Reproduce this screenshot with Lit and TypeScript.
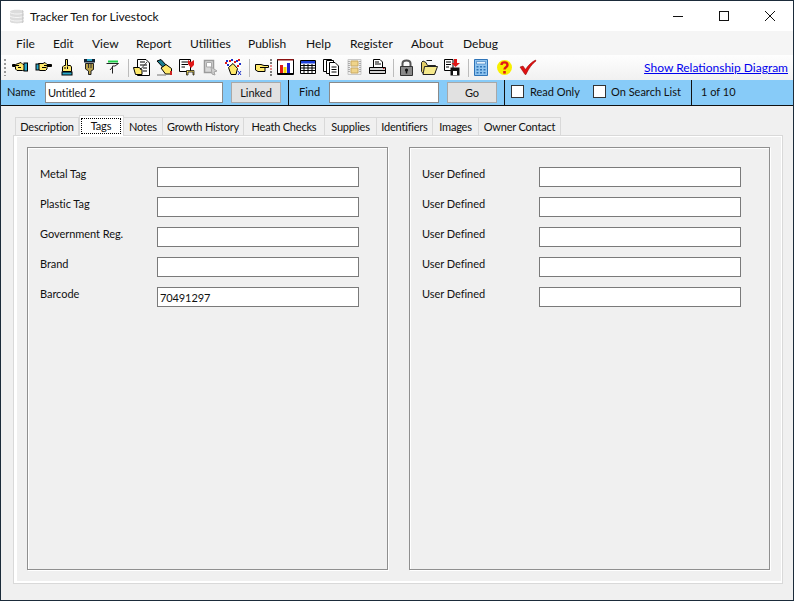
import { LitElement, html, css, svg } from "lit";
import { customElement } from "lit/decorators.js";

const hand = (d: string, cuff = "#2aa7c9") => svg`<path d="${d}" fill="#ffe96b" stroke="#000" stroke-width="1"/><rect x="1" y="5" width="3" height="6" fill="${cuff}" stroke="#000"/>`;

const icons: Record<string, unknown> = {
  left: svg`<path d="M14.5 5.5H11L9 3.5 3.5 5.5H.5V7.5H3.5V10L5 11.5H10.5L14.5 10.5Z" fill="#ffe96b" stroke="#000"/><rect x="12" y="4" width="3.5" height="8" fill="#2aa7c9" stroke="#000"/><path d="M1 6.5H7M6 8.5H9" stroke="#000"/>`,
  right: svg`${hand("M3.5 4.5H8L10 3.5 12 5.5H16.5V7.5H12V10L10.5 11.5H5L3.5 10.5Z")}<path d="M9 6.5H16M7 8.5H11" stroke="#000"/>`,
  up: svg`<path d="M7.5 .5H9.5V6.5H12.5L13.5 8V12.5H4.5V8L6 6.5H7.5Z" fill="#ffe96b" stroke="#000"/><rect x="4" y="13" width="10" height="3" fill="#2aa7c9" stroke="#000"/><path d="M9.5 7.5V10M7 8V10" stroke="#000"/>`,
  down: svg`<rect x="3" y="0" width="11" height="3.5" fill="#123" /><rect x="6" y="0" width="5" height="2" fill="#2aa7c9"/><path d="M4.5 4.5H12.5V10.5L10 12V15.5H7.5V12L4.5 10Z" fill="#b9a24a" stroke="#222"/><path d="M7.5 5V9M10 5V9" stroke="#333"/>`,
  filter: svg`<path d="M4 2.5H14" stroke="#1fd04a" stroke-width="2"/><path d="M2.5 4.5H14.5L11 7H8.5V14.5M8.5 8L6 11" fill="none" stroke="#222"/>`,
  note: svg`<path d="M4.5 .5H13L16.5 4V16.5H4.5Z" fill="#fff" stroke="#000"/><path d="M7 3H12M7 6H14M10 9H14M10 12H14" stroke="#000"/><path d="M.5 8.5H6L9 10.5V15.5H2.5Z" fill="#ffe96b" stroke="#000"/><path d="M14 3L7 11" stroke="#444"/>`,
  pen: svg`<path d="M1 2L5 .5 11 7 8 9.5Z" fill="#1c7f90" stroke="#000"/><path d="M5 9L10 5.5 15.5 9.5V15H9.5Z" fill="#ffe96b" stroke="#000"/><path d="M1 16H10" stroke="#777"/><path d="M15 12V16" stroke="#c22" stroke-width="2"/>`,
  del: svg`<path d="M.5 .5H11.5V12.5H.5Z" fill="#fff" stroke="#000"/><path d="M2.5 3H9M2.5 5.5H9M2.5 8H6" stroke="#000"/><path d="M9 1L12 3 15 1 15 6 12 9 9 5Z" fill="#e01818"/><path d="M7.5 11.5H15V16H14V13H9V16H7.5Z" fill="#ffe96b" stroke="#000" stroke-width=".7"/>`,
  ghost: svg`<path d="M2.5 1.5H11.5V13.5H2.5Z" fill="#d8d8d8" stroke="#9b9b9b" stroke-width="1.5"/><path d="M4.5 3.5H9.5V8H4.5Z" fill="#fff" stroke="#aaa"/><path d="M9 8L15 12 12 13 13 16 10 15Z" fill="#cfcfcf" stroke="#a5a5a5"/>`,
  sparkle: svg`<path d="M0 0H16V10H0Z" fill="#fff"/><path d="M1 1H3V3H1ZM6 0H8V2H6ZM11 1H13V3H11ZM14 4H16V6H14ZM2 5H4V7H2Z" fill="#1c2fc8"/><path d="M4 1H6V3H4ZM9 2H11V4H9ZM13 0H15V2H13ZM0 3H2V5H0ZM12 6H14V8H12Z" fill="#e01818"/><path d="M3.5 8.5L8 4.5 12.5 9.5 11 15.5H6Z" fill="#ffe96b" stroke="#000"/><path d="M13 12L16 16M16 12L13 16" stroke="#1c2fc8"/>`,
  handdots: svg`<path d="M1.5 5.5H7L10 6.5H14.5V8.5H11V12.5H4L1.5 11Z" fill="#ffe96b" stroke="#000"/><path d="M6 8.5H11" stroke="#000"/><path d="M16 1H18M16 4H18M16 13H18M16 16H18" stroke="#000"/><path d="M16 7H18M16 10H18" stroke="#d01818"/>`,
  chart: svg`<path d="M.5 .5H16.5V15.5H.5Z" fill="#fff" stroke="#000"/><path d="M.5 .5H16.5" stroke="#8a1010" stroke-width="2"/><path d="M3 6H6V14H3Z" fill="#e01818"/><path d="M6.5 8H9.5V14H6.5Z" fill="#f4d800"/><path d="M10 4H13V14H10Z" fill="#2020d0"/><path d="M1 14.5H16" stroke="#000"/>`,
  table: svg`<path d="M.5 1.5H15.5V14.5H.5Z" fill="#fff" stroke="#000"/><path d="M1 2H15V4.5H1Z" fill="#1c3fd8"/><path d="M1 6.5H15M1 9H15M1 11.5H15M4 5V14M8 5V14M12 5V14" stroke="#000"/>`,
  pages: svg`<path d="M.5 .5H8.5V12.5H.5Z" fill="#fff" stroke="#000"/><path d="M3.5 1.5H10.5V14.5H3.5Z" fill="#fff" stroke="#000"/><path d="M6.5 3.5H12L15.5 7V16.5H6.5Z" fill="#fff" stroke="#000"/><path d="M8.5 8H13.5M8.5 10.5H13.5M8.5 13H13.5" stroke="#000"/>`,
  film: svg`<path d="M2 .5H15V15.5H2Z" fill="#eee" stroke="#c8c8c8"/><path d="M5 2H12V7H5ZM5 9H12V14H5Z" fill="#f0d48a" stroke="#c9a860"/><path d="M3 2V14M14 2V14" stroke="#9a9a9a" stroke-width="1.5" stroke-dasharray="1 1"/>`,
  print: svg`<path d="M4.5 .5H11L13.5 3V8.5H4.5Z" fill="#fff" stroke="#000"/><path d="M6 3H10M6 5H12" stroke="#000"/><path d="M.5 8.5H16.5V14.5H.5Z" fill="#d4d4d4" stroke="#000"/><path d="M1 11.5H16" stroke="#000"/><path d="M14 9.5H15.5" stroke="#c22"/>`,
  lock: svg`<path d="M4.5 7V4.5C4.5 .5 12.5 .5 12.5 4.5V7" fill="none" stroke="#555" stroke-width="2"/><path d="M2.5 7.5H14.5V16.5H2.5Z" fill="#8a8a8a" stroke="#333"/><circle cx="8.5" cy="11" r="1.6" fill="#111"/><path d="M8.5 11V14.5" stroke="#111" stroke-width="1.5"/>`,
  folder: svg`<path d="M.5 3.5V12.5L3 15.5H13L14.5 13V6.5H6.5L5 3.5 2 2Z" fill="#e5cf67" stroke="#222"/><path d="M3.5 7.5H16.5L13.5 15.5H2Z" fill="#f6e98c" stroke="#222"/><path d="M5.5 1.5H11" stroke="#222"/>`,
  save: svg`<path d="M.5 .5H9V11.5H.5Z" fill="#fff" stroke="#000"/><path d="M2 3H7M2 5.5H7M2 8H5" stroke="#000"/><path d="M10 0H13V4H16L11.5 8 7.5 4H10Z" fill="#e01818"/><path d="M6.5 8.5H15.5V16.5H6.5Z" fill="#111"/><path d="M9 12H13V16H9Z" fill="#fff"/>`,
  calc: svg`<path d="M1.5 .5H14.5V16.5H1.5Z" fill="#8fc4ef" stroke="#2f74b8"/><path d="M3.5 2.5H12.5V5H3.5Z" fill="#e6f3fd" stroke="#2f74b8" stroke-width=".6"/><path d="M3.5 7H5.5V8.5H3.5ZM7 7H9V8.5H7ZM10.5 7H12.5V8.5H10.5ZM3.5 10H5.5V11.5H3.5ZM7 10H9V11.5H7ZM10.5 10H12.5V11.5H10.5ZM3.5 13H5.5V14.5H3.5ZM7 13H9V14.5H7ZM10.5 13H12.5V14.5H10.5Z" fill="#2f74b8"/>`,
  help: svg`<circle cx="8.5" cy="8.5" r="7.5" fill="#f8f000"/><path d="M5.5 6C5.5 2.5 11.5 2.5 11.5 6 11.5 8.5 8.5 8 8.5 10.5" fill="none" stroke="#e01818" stroke-width="2.4"/><rect x="7.2" y="12" width="2.6" height="2.6" fill="#e01818"/>`,
  check: svg`<path d="M1 8L4 7 6.5 10.5C9 6.5 12.5 3 16.5 1L17 2C13 5 10 9 7 15.5H6Z" fill="#e01010" stroke="#8a0000" stroke-width=".5"/>`,
};

const groups = [
  ["left", "right", "up", "down", "filter"],
  ["note", "pen", "del", "ghost", "sparkle"],
  ["handdots", "chart", "table", "pages", "film", "print"],
  ["lock", "folder", "save"],
  ["calc", "help", "check"],
];

const menu: [string, number][] = [["File", 37], ["Edit", 39], ["View", 44], ["Report", 54], ["Utilities", 58], ["Publish", 58], ["Help", 44], ["Register", 61], ["About", 52], ["Debug", 50]];
const tabs: [string, number][] = [["Description", 64], ["Tags", 45], ["Notes", 39], ["Growth History", 81], ["Heath Checks", 81], ["Supplies", 52], ["Identifiers", 56], ["Images", 46], ["Owner Contact", 82]];
const left: [string, string][] = [["Metal Tag", ""], ["Plastic Tag", ""], ["Government Reg.", ""], ["Brand", ""], ["Barcode", "70491297"]];
const right: [string, string][] = Array.from({ length: 5 }, () => ["User Defined", ""] as [string, string]);

@customElement("app-root")
export class AppRoot extends LitElement {
  static styles = css`
    :host { display: block; width: 794px; height: 601px; font-family: "Lato", "Open Sans", sans-serif; font-size: 11px; color: #111; }
    .win { box-sizing: border-box; width: 794px; height: 601px; border: 1px solid #1b2b3a; background: #f0f0f0; display: flex; flex-direction: column; overflow: hidden; }
    .title { height: 30px; flex: none; background: #fff; display: flex; align-items: center; padding-left: 9px; }
    .title svg.app { width: 14px; height: 15px; margin-right: 6px; flex: none; }
    .title .name { font-size: 12px; letter-spacing: -0.05px; flex: 1; }
    .wbtn { width: 46px; height: 30px; flex: none; display: flex; align-items: center; justify-content: center; }
    .wbtn svg { width: 12px; height: 12px; display: block; }
    .menu { height: 24px; flex: none; background: #f5f5f5; display: flex; align-items: center; padding-left: 15px; font-size: 12px; }
    .tools { height: 25px; flex: none; background: linear-gradient(#fefefe, #f1f1f1); display: flex; align-items: center; padding-left: 3px; box-sizing: border-box; }
    .grip { width: 2px; height: 17px; margin-right: 3px; background: repeating-linear-gradient(#9a9a9a 0 2px, transparent 2px 4px); }
    .sep { width: 1px; height: 18px; background: #bcbcbc; margin: 0 1px 0 4px; flex: none; }
    .ic { width: 23px; height: 18px; display: flex; justify-content: center; flex: none; }
    .ic svg { width: 18px; height: 17px; }
    .link { margin-left: auto; margin-right: 5px; color: #0000ee; text-decoration: underline; font-size: 12px; }
    .bar { height: 26px; flex: none; box-sizing: border-box; background: #87cbf8; border-bottom: 1px solid #111; display: flex; align-items: stretch; }
    .cell { display: flex; align-items: center; border-right: 1px solid #111; box-sizing: border-box; }
    .cell.last { border-right: 0; }
    .bar .txt { white-space: nowrap; padding-bottom: 2px; }
    .binput { box-sizing: border-box; height: 21px; background: #fff; border: 1px solid #8a8a8a; padding: 0 2px; display: flex; align-items: center; letter-spacing: -0.1px; }
    .btn { box-sizing: border-box; height: 21px; background: #e1e1e1; border: 1px solid #a8a8a8; display: flex; align-items: center; justify-content: center; }
    .cb { box-sizing: border-box; width: 13px; height: 13px; background: #fff; border: 1px solid #333; flex: none; margin-bottom: 2px; }
    .body { flex: 1; display: flex; flex-direction: column; padding: 9px 10px 16px 12px; min-height: 0; }
    .tabs { display: flex; height: 20px; flex: none; align-items: flex-end; padding-left: 2px; position: relative; z-index: 1; }
    .tab { box-sizing: border-box; height: 18px; border: 1px solid #d9d9d9; border-bottom: 0; border-left: 0; background: #f0f0f0; display: flex; align-items: center; justify-content: center; white-space: nowrap; letter-spacing: -0.2px; }
    .tab.first { border-left: 1px solid #d9d9d9; }
    .tab.sel { height: 21px; background: #fff; border: 1px solid #d9d9d9; border-bottom: 0; padding: 2px 2px 2px 1px; margin-bottom: -1px; align-items: stretch; }
    .tab.sel span { flex: 1; display: flex; align-items: center; justify-content: center; outline: 1px dotted #000; outline-offset: -1px; padding-bottom: 2px; }
    .panel { flex: 1; box-sizing: border-box; border: 1px solid #d9d9d9; box-shadow: inset 3px 0 0 #fff, inset -1px 0 0 #fff, inset 0 -2px 0 #fff, inset 0 1px 0 #fff; background: #f0f0f0; padding: 11px 12px 13px 13px; display: flex; gap: 21px; min-height: 0; }
    .group { box-sizing: border-box; width: 361px; border: 1px solid #8f8f8f; box-shadow: inset 1px 1px 0 #fff, 1px 1px 0 #fff; padding: 19px 0 0 12px; display: flex; flex-direction: column; gap: 10px; }
    .row { display: flex; height: 20px; }
    .row label { width: 117px; flex: none; margin-top: -1px; line-height: 16px; white-space: nowrap; letter-spacing: -0.05px; }
    .field { box-sizing: border-box; width: 202px; height: 20px; background: #fff; border: 1px solid #7a7a7a; padding-left: 2px; display: flex; align-items: center; letter-spacing: -0.1px; }
  `;

  private row(r: [string, string]) {
    return html`<div class="row"><label>${r[0]}</label><div class="field">${r[1]}</div></div>`;
  }

  render() {
    return html`<div class="win">
      <div class="title">
        <svg class="app" viewBox="0 0 14 15"><path d="M0 2.5C0 0 14 0 14 2.5V12.5C14 15 0 15 0 12.5Z" fill="#dcdcdc"/><path d="M0 3.5C2 5.5 12 5.5 14 3.5M0 7C2 9 12 9 14 7M0 10.5C2 12.5 12 12.5 14 10.5" stroke="#f6f6f6" fill="none"/><path d="M12.5 1V14" stroke="#bdbdbd" opacity=".5"/></svg>
        <span class="name">Tracker Ten for Livestock</span>
        <div class="wbtn"><svg viewBox="0 0 12 12"><path d="M1 6.5H11" stroke="#111"/></svg></div>
        <div class="wbtn"><svg viewBox="0 0 12 12"><rect x="1.5" y="1.5" width="9" height="9" fill="none" stroke="#111"/></svg></div>
        <div class="wbtn"><svg viewBox="0 0 12 12"><path d="M1 1L11 11M11 1L1 11" stroke="#111"/></svg></div>
      </div>
      <div class="menu">${menu.map(([m, w]) => html`<span style="width:${w}px">${m}</span>`)}</div>
      <div class="tools">
        <div class="grip"></div>
        ${groups.map((g, i) => html`${i ? html`<div class="sep"></div>` : ""}${g.map((k) => html`<div class="ic"><svg viewBox="0 0 18 17">${icons[k]}</svg></div>`)}`)}
        <span class="link">Show Relationship Diagram</span>
      </div>
      <div class="bar">
        <div class="cell" style="width:288px;padding-left:6px"><span class="txt" style="width:38px">Name</span><div class="binput" style="width:178px">Untitled 2</div><div class="btn" style="width:50px;margin-left:8px">Linked</div></div>
        <div class="cell" style="width:216px;padding-left:10px"><span class="txt" style="width:30px">Find</span><div class="binput" style="width:110px"></div><div class="btn" style="width:50px;margin-left:8px">Go</div></div>
        <div class="cell" style="width:187px;padding-left:6px"><div class="cb"></div><span class="txt" style="width:63px;margin-left:6px">Read Only</span><div class="cb"></div><span class="txt" style="margin-left:5px">On Search List</span></div>
        <div class="cell last" style="padding-left:9px"><span class="txt">1 of 10</span></div>
      </div>
      <div class="body">
        <div class="tabs">${tabs.map(([t, w], i) => html`<div class="tab ${t === "Tags" ? "sel" : ""} ${i === 0 ? "first" : ""}" style="width:${w}px">${t === "Tags" ? html`<span>${t}</span>` : t}</div>`)}</div>
        <div class="panel">
          <div class="group">${left.map((r) => this.row(r))}</div>
          <div class="group">${right.map((r) => this.row(r))}</div>
        </div>
      </div>
    </div>`;
  }
}
